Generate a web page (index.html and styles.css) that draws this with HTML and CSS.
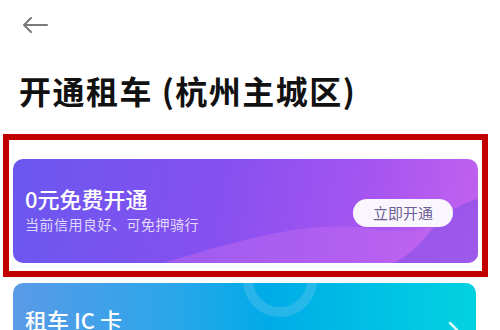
FILE: index.html
```html
<!DOCTYPE html>
<html lang="zh-CN">
<head>
<meta charset="utf-8">
<title>开通租车</title>
<link rel="stylesheet" href="styles.css">
</head>
<body>
<div class="header">
  <svg class="back" width="26" height="16" viewBox="0 0 26 16">
    <path d="M25 8H2M9 1L2 8l7 7" fill="none" stroke="#7a7a7a" stroke-width="2" stroke-linecap="round" stroke-linejoin="round"/>
  </svg>
</div>
<h1 class="title">开通租车 (杭州主城区)</h1>
<div class="highlight">
  <div class="card">
    <svg class="card-deco" viewBox="0 0 464 104" preserveAspectRatio="none">
      <path d="M150 104 C230 80 300 60 360 70 C410 78 440 60 464 50 L464 104 Z" fill="#c56cf0" opacity="0.45"/>
      <path d="M380 104 C410 90 420 60 440 50 C452 44 460 40 464 40 L464 104 Z" fill="#7d4ee6" opacity="0.55"/>
    </svg>
    <div class="card-text">
      <div class="card-title">0元免费开通</div>
      <div class="card-sub">当前信用良好、可免押骑行</div>
    </div>
    <button class="card-btn">立即开通</button>
  </div>
</div>
<div class="ic-card">
  <svg class="ic-deco" viewBox="0 0 463 80" preserveAspectRatio="none">
    <circle cx="267" cy="-3" r="32" fill="none" stroke="#5fc2ee" stroke-width="10" opacity="0.4"/>
    <polyline points="437,40 448,51 437,62" fill="none" stroke="#ffffff" stroke-width="2.5" stroke-linecap="round" opacity="0.85"/>
  </svg>
  <div class="ic-title">租车 IC 卡</div>
</div>
</body>
</html>
```
FILE: styles.css
```css
html, body {
  margin: 0;
  padding: 0;
  background: #ffffff;
  font-family: "Noto Sans CJK SC", "Noto Sans", sans-serif;
  overflow: hidden;
}
.header {
  height: 50px;
  display: flex;
  align-items: center;
  padding-left: 22px;
}
.back {
  display: block;
}
.title {
  margin: 20px 0 0 19px;
  font-size: 32px;
  line-height: 40px;
  font-weight: 700;
  color: #111111;
  letter-spacing: 1.5px;
}
.highlight {
  margin: 24px 12px 0 3px;
  border: 6px solid #c20000;
  padding: 19px 4px 8px 4px;
  background: #ffffff;
}
.card {
  position: relative;
  height: 104px;
  border-radius: 10px;
  overflow: hidden;
  background: linear-gradient(100deg, #6a57ef 0%, #8750f0 45%, #a655f0 75%, #c262ef 100%);
  display: flex;
  align-items: center;
  justify-content: space-between;
  padding: 0 25px 0 12px;
  box-sizing: border-box;
}
.card-deco {
  position: absolute;
  left: 0;
  top: 0;
  width: 100%;
  height: 100%;
}
.card-text {
  position: relative;
  margin-bottom: 4px;
}
.card-title {
  font-size: 22px;
  line-height: 28px;
  font-weight: 500;
  color: #ffffff;
}
.card-sub {
  margin-top: 2px;
  font-size: 14px;
  line-height: 20px;
  letter-spacing: 0.5px;
  color: rgba(255, 255, 255, 0.78);
}
.card-btn {
  position: relative;
  margin-top: 4px;
  width: 100px;
  height: 28px;
  border: none;
  border-radius: 14px;
  background: #faf6fd;
  color: #6c5f95;
  font-family: "Noto Sans CJK SC", sans-serif;
  font-size: 15px;
  line-height: 28px;
  padding: 0;
}
.ic-card {
  position: relative;
  margin: 6px 24px 0 13px;
  height: 80px;
  border-radius: 10px;
  overflow: hidden;
  background: linear-gradient(90deg, #5a9ae7 0%, #2aa6ea 35%, #00abe8 55%, #00c2e4 80%, #02d2e0 100%);
  padding: 22px 0 0 12px;
  box-sizing: border-box;
}
.ic-deco {
  position: absolute;
  left: 0;
  top: 0;
  width: 100%;
  height: 100%;
}
.ic-title {
  position: relative;
  font-size: 22px;
  line-height: 28px;
  font-weight: 500;
  color: #ffffff;
}
```
